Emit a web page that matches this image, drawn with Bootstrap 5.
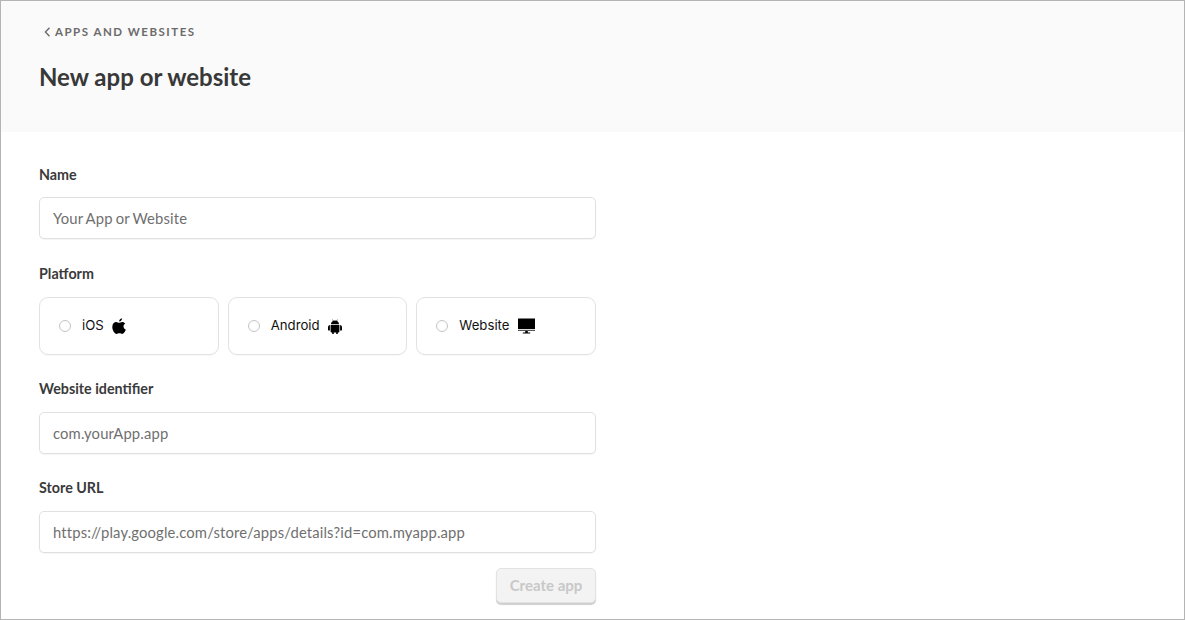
<!DOCTYPE html>
<html lang="en">
<head>
<meta charset="utf-8">
<title>New app or website</title>
<link href="https://cdn.jsdelivr.net/npm/bootstrap@5.3.0/dist/css/bootstrap.min.css" rel="stylesheet">
<style>
html,body{height:620px;overflow:hidden;background:#fff}
body{font-family:"Lato","Liberation Sans",sans-serif;color:#3a3a3a}
.frame-box{height:620px;border:1px solid #b4b4b4;overflow:hidden}
.head-band{height:131px;background:#fafafa;padding:24px 38px 0}
.back-link{font-size:11.5px;font-weight:700;letter-spacing:1.5px;color:#6d6a6b;line-height:14px;padding-left:5px;text-decoration:none;gap:4px}
.page-title{font-size:24px;font-weight:700;color:#383838;margin:23px 0 0;line-height:30px}
.form-wrap{width:595px;padding:33px 0 0 38px}
.field-label{display:block;font-size:14.3px;font-weight:700;color:#3a3a3a;line-height:20px;margin:0 0 13px}
.field-label.first-label{margin-bottom:12px}
.form-control.text-field{height:42px;border:1px solid #e0e0e0;border-radius:5px;padding:0 13px;font-size:14.8px;letter-spacing:.15px;word-spacing:-.8px;color:#6f6f6f;box-shadow:0 1px 1px rgba(0,0,0,.04)}
.form-control.text-field::placeholder{color:#6f6f6f;opacity:1}
.field-gap{margin-bottom:24px}
.field-gap.first-gap{margin-bottom:25px}
.plat-row{gap:9px;margin-bottom:24px}
.plat-card{flex:1 1 0;height:58px;border:1px solid #e2e2e2;border-radius:9px;padding:0 19px;margin:0;gap:8.5px;font-family:"Inter","Liberation Sans",sans-serif;font-size:13.2px;color:#111;box-shadow:0 1px 1px rgba(0,0,0,.03);cursor:pointer}
.plat-card .form-check-input{width:12px;height:12px;margin:0 2.500px 0 0;border:1px solid #c4c4c4;flex:none}
.plat-card svg{flex:none;display:block}
.btn.create-btn,.btn.create-btn:disabled{width:100px;height:35px;padding:0;margin-top:-1px;background:#f3f3f3;border:1px solid #e2e2e2;border-radius:5px;color:#c8c8c8;font-size:15px;font-weight:700;opacity:1;box-shadow:0 2px 1px #cfcfcf}
</style>
</head>
<body>
<div class="frame-box">
  <div class="head-band">
    <a href="#" class="back-link d-flex align-items-center">
      <svg width="7" height="10" viewBox="0 0 7 10" fill="none" stroke="#6d6a6b" stroke-width="1.4"><path d="M5.500 .8 1.400 5l4.100 4.200"/></svg>
      <span>APPS AND WEBSITES</span>
    </a>
    <h1 class="page-title">New app or website</h1>
  </div>
  <form class="form-wrap">
    <div class="field-gap first-gap">
      <label class="field-label first-label" for="appName">Name</label>
      <input id="appName" type="text" class="form-control text-field" placeholder="Your App or Website">
    </div>
    <span class="field-label">Platform</span>
    <div class="d-flex plat-row">
      <label class="plat-card d-flex align-items-center">
        <input class="form-check-input" type="radio" name="platform">
        <span>iOS</span>
        <svg width="14" height="16" viewBox="0 0 14 16" fill="#000"><path d="M7.200 3.600C7 2 8.200.5 10 .2c.1 1.800-1.100 3.300-2.800 3.400ZM7 4.700c.8 0 1.800-.8 3.200-.8 1.100 0 2.300.6 3 1.700-2.500 1.500-2.100 5 .6 6.100-.7 1.800-2.200 4.200-3.600 4.200-1 0-1.500-.6-2.800-.6s-1.900.6-2.900.6C2.700 15.900.3 12 .3 8.900.3 5.700 2.200 3.900 4.200 3.900c1.200 0 2.100.8 2.800.8Z"/></svg>
      </label>
      <label class="plat-card d-flex align-items-center">
        <input class="form-check-input" type="radio" name="platform">
        <span>Android</span>
        <svg width="14" height="15" viewBox="0 0 14 15" fill="#000"><path d="M2.900 5.200C3 3.700 4 2.500 5 2L4.300.6l.4-.2L5.500 1.800a4 4 0 0 1 3 0L9.300.4l.4.2L9 2c1 .5 2 1.700 2.100 3.200H2.900Z"/><path d="M2.600 5.900h8.800v6.600c0 .5-.4.9-.9.9h-.7V15H8.200v-1.600H5.800V15H4.200v-1.600H3.500c-.5 0-.9-.4-.9-.9V5.900Z"/><path d="M1.900 6.100v5.500H.9c-.5 0-.9-.4-.9-.9V8.400c0-1.300.8-2.300 1.900-2.300ZM12.100 6.100v5.500h1c.5 0 .9-.4.9-.9V8.400c0-1.300-.8-2.300-1.900-2.300Z"/></svg>
      </label>
      <label class="plat-card d-flex align-items-center">
        <input class="form-check-input" type="radio" name="platform">
        <span>Website</span>
        <svg width="17" height="16" viewBox="0 0 17 16" fill="#000"><path d="M0 .5h17v10.500H0z"/><path d="M0 11.800h17V13H0z" fill="#555"/><path d="M7.200 13h2.600v1.500h2.400v1H4.800v-1h2.400z"/></svg>
      </label>
    </div>
    <div class="field-gap">
      <label class="field-label" for="webId">Website identifier</label>
      <input id="webId" type="text" class="form-control text-field" placeholder="com.yourApp.app">
    </div>
    <div>
      <label class="field-label" for="storeUrl">Store URL</label>
      <input id="storeUrl" type="text" class="form-control text-field" placeholder="https://play.google.com/store/apps/details?id=com.myapp.app">
    </div>
    <div class="d-flex justify-content-end mt-3">
      <button type="button" class="btn create-btn" disabled>Create app</button>
    </div>
  </form>
</div>
</body>
</html>
